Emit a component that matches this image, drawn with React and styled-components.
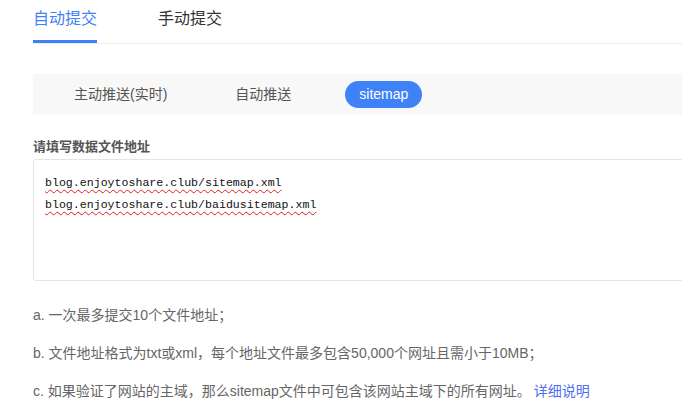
import React from "react";
import styled, { createGlobalStyle } from "styled-components";

const GlobalStyle = createGlobalStyle`
  body {
    margin: 0;
    background: #fff;
    font-family: "Liberation Sans", "Noto Sans CJK SC", sans-serif;
    overflow: hidden;
  }
`;

const Page = styled.div`
  padding-left: 33px;
  width: 682px;
  box-sizing: border-box;
  overflow: hidden;
`;

const Tabs = styled.div`
  display: flex;
  gap: 61px;
  height: 43px;
  border-bottom: 1px solid #ececec;
`;

const Tab = styled.div`
  position: relative;
  font-size: 16px;
  line-height: 38px;
  color: ${({ active }) => (active ? "#3f82f7" : "#333")};

  &:after {
    content: "";
    display: ${({ active }) => (active ? "block" : "none")};
    position: absolute;
    left: 0;
    right: 0;
    bottom: 0;
    height: 3px;
    background: #3f82f7;
  }
`;

const Segments = styled.div`
  display: flex;
  align-items: center;
  gap: 40px;
  margin-top: 30px;
  height: 41px;
  padding-left: 27px;
  background: #f8f8f8;
`;

const Segment = styled.div`
  height: 27px;
  line-height: 27px;
  padding: 0 14px;
  border-radius: 14px;
  font-size: 14px;
  color: ${({ active }) => (active ? "#fff" : "#555")};
  background: ${({ active }) => (active ? "#3f82f7" : "transparent")};
`;

const Label = styled.div`
  margin-top: 22px;
  font-size: 13px;
  font-weight: bold;
  color: #555;
  line-height: 20px;
`;

const Field = styled.div`
  margin-top: 2px;
  width: 700px;
  height: 122px;
  padding: 12px 11px;
  box-sizing: border-box;
  border: 1px solid #e4e4e4;
  border-radius: 3px;
`;

const Url = styled.div`
  font-family: "Liberation Mono", monospace;
  font-size: 11.6px;
  line-height: 22px;
  color: #111;
  text-decoration: underline wavy #e02020;
  text-decoration-thickness: 1px;
  text-underline-offset: 3px;
  width: fit-content;
`;

const Notes = styled.div`
  margin-top: 15px;
`;

const Note = styled.div`
  font-size: 14px;
  line-height: 38px;
  color: #666;
`;

const Link = styled.a`
  color: #4e6ef2;
  text-decoration: none;
  margin-left: 3px;
`;

export default function App() {
  return (
    <Page>
      <GlobalStyle />
      <Tabs>
        <Tab active>自动提交</Tab>
        <Tab>手动提交</Tab>
      </Tabs>
      <Segments>
        <Segment>主动推送(实时)</Segment>
        <Segment>自动推送</Segment>
        <Segment active>sitemap</Segment>
      </Segments>
      <Label>请填写数据文件地址</Label>
      <Field>
        <Url>blog.enjoytoshare.club/sitemap.xml</Url>
        <Url>blog.enjoytoshare.club/baidusitemap.xml</Url>
      </Field>
      <Notes>
        <Note>a. 一次最多提交10个文件地址；</Note>
        <Note>b. 文件地址格式为txt或xml，每个地址文件最多包含50,000个网址且需小于10MB；</Note>
        <Note>
          c. 如果验证了网站的主域，那么sitemap文件中可包含该网站主域下的所有网址。
          <Link href="#">详细说明</Link>
        </Note>
      </Notes>
    </Page>
  );
}
